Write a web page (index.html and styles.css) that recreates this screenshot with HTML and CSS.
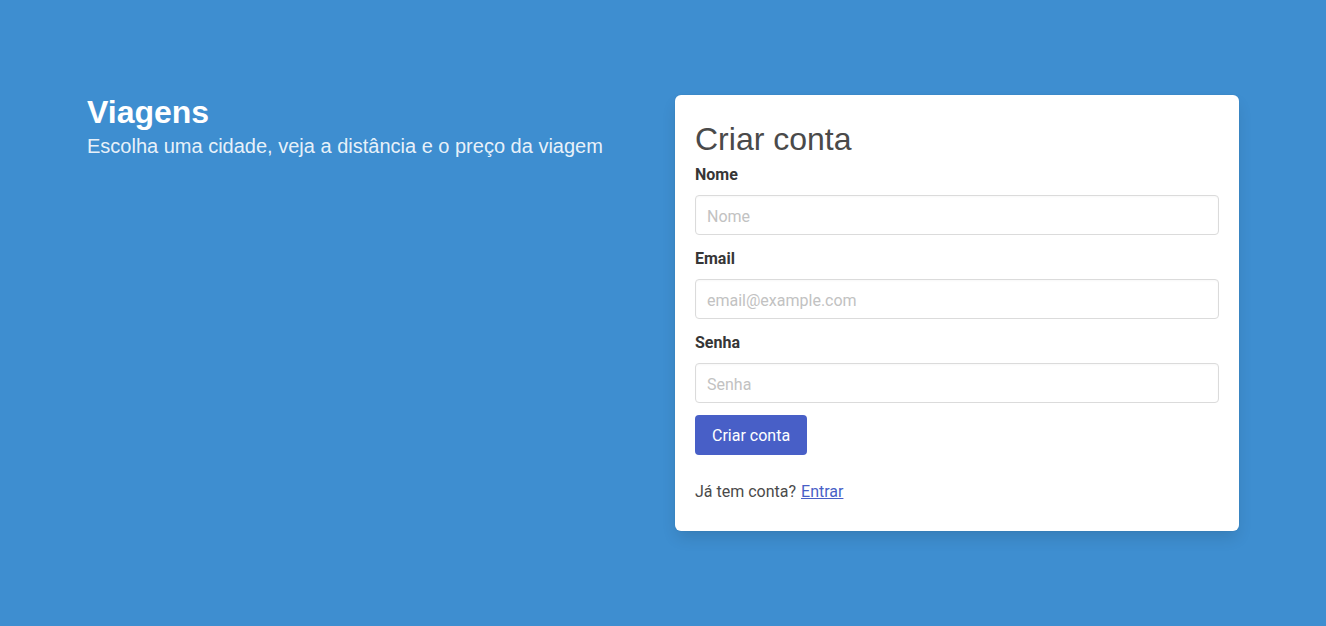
FILE: index.html
```html
<!DOCTYPE html>
<html lang="pt-BR">
<head>
<meta charset="utf-8">
<title>Viagens</title>
<link rel="stylesheet" href="styles.css">
</head>
<body>
<main class="page">
  <div class="columns">
    <section class="intro">
      <h1 class="intro-title">Viagens</h1>
      <p class="intro-subtitle">Escolha uma cidade, veja a distância e o preço da viagem</p>
    </section>
    <section class="card">
      <h2 class="card-title">Criar conta</h2>
      <form class="form">
        <div class="field">
          <label class="label" for="nome">Nome</label>
          <input class="input" id="nome" type="text" placeholder="Nome">
        </div>
        <div class="field">
          <label class="label" for="email">Email</label>
          <input class="input" id="email" type="email" placeholder="email@example.com">
        </div>
        <div class="field">
          <label class="label" for="senha">Senha</label>
          <input class="input" id="senha" type="password" placeholder="Senha">
        </div>
        <div class="field">
          <button class="button" type="button">Criar conta</button>
        </div>
      </form>
      <p class="switch">Já tem conta? <a href="#" class="link">Entrar</a></p>
    </section>
  </div>
</main>
</body>
</html>
```

FILE: styles.css
```css
* { box-sizing: border-box; }
html, body { margin: 0; padding: 0; }
body {
  background: #3e8ed0;
  font-family: Roboto, "Liberation Sans", sans-serif;
  color: #4a4a4a;
  font-size: 16px;
}
.page {
  min-height: 100vh;
  display: flex;
  align-items: center;
  justify-content: center;
}
.columns {
  width: 1152px;
  display: grid;
  grid-template-columns: 1fr 1fr;
  gap: 24px;
  align-items: start;
}
.intro-title {
  margin: 0;
  font-family: "Liberation Sans", Arial, sans-serif;
  font-size: 32px;
  line-height: 35px;
  font-weight: 700;
  color: #fff;
}
.intro-subtitle {
  margin: 0;
  font-family: "Liberation Sans", Arial, sans-serif;
  font-size: 20px;
  line-height: 32px;
  color: rgba(255, 255, 255, 0.9);
}
.card {
  background: #fff;
  border-radius: 6px;
  padding: 20px 20px 0;
  box-shadow: 0 8px 16px -2px rgba(10, 10, 10, 0.12), 0 0 0 1px rgba(10, 10, 10, 0.02);
}
.card-title {
  margin: 0;
  font-family: "Liberation Sans", Arial, sans-serif;
  font-size: 32px;
  line-height: 48px;
  font-weight: 400;
  color: #4a4a4a;
}
.form { display: flex; flex-direction: column; gap: 12px; }
.field { display: flex; flex-direction: column; align-items: flex-start; }
.label {
  font-weight: 700;
  color: #363636;
  line-height: 24px;
  margin-bottom: 8px;
}
.input {
  width: 100%;
  height: 40px;
  border: 1px solid #dbdbdb;
  border-radius: 4px;
  padding: 2px 11px 0;
  font-family: Roboto, sans-serif;
  font-size: 16px;
  color: #363636;
  background: #fff;
  box-shadow: inset 0 1px 2px rgba(10, 10, 10, 0.03);
}
.input::placeholder { color: #c2c2c2; }
.button {
  height: 40px;
  padding: 0 16px;
  border: 1px solid transparent;
  border-radius: 4px;
  background: #485fc7;
  color: #fff;
  font-family: Roboto, sans-serif;
  font-size: 16px;
}
.switch {
  margin: 26px 0 0;
  padding-bottom: 28px;
  line-height: 22px;
}
.link { color: #485fc7; text-decoration: underline; margin-left: 1px; }
```
